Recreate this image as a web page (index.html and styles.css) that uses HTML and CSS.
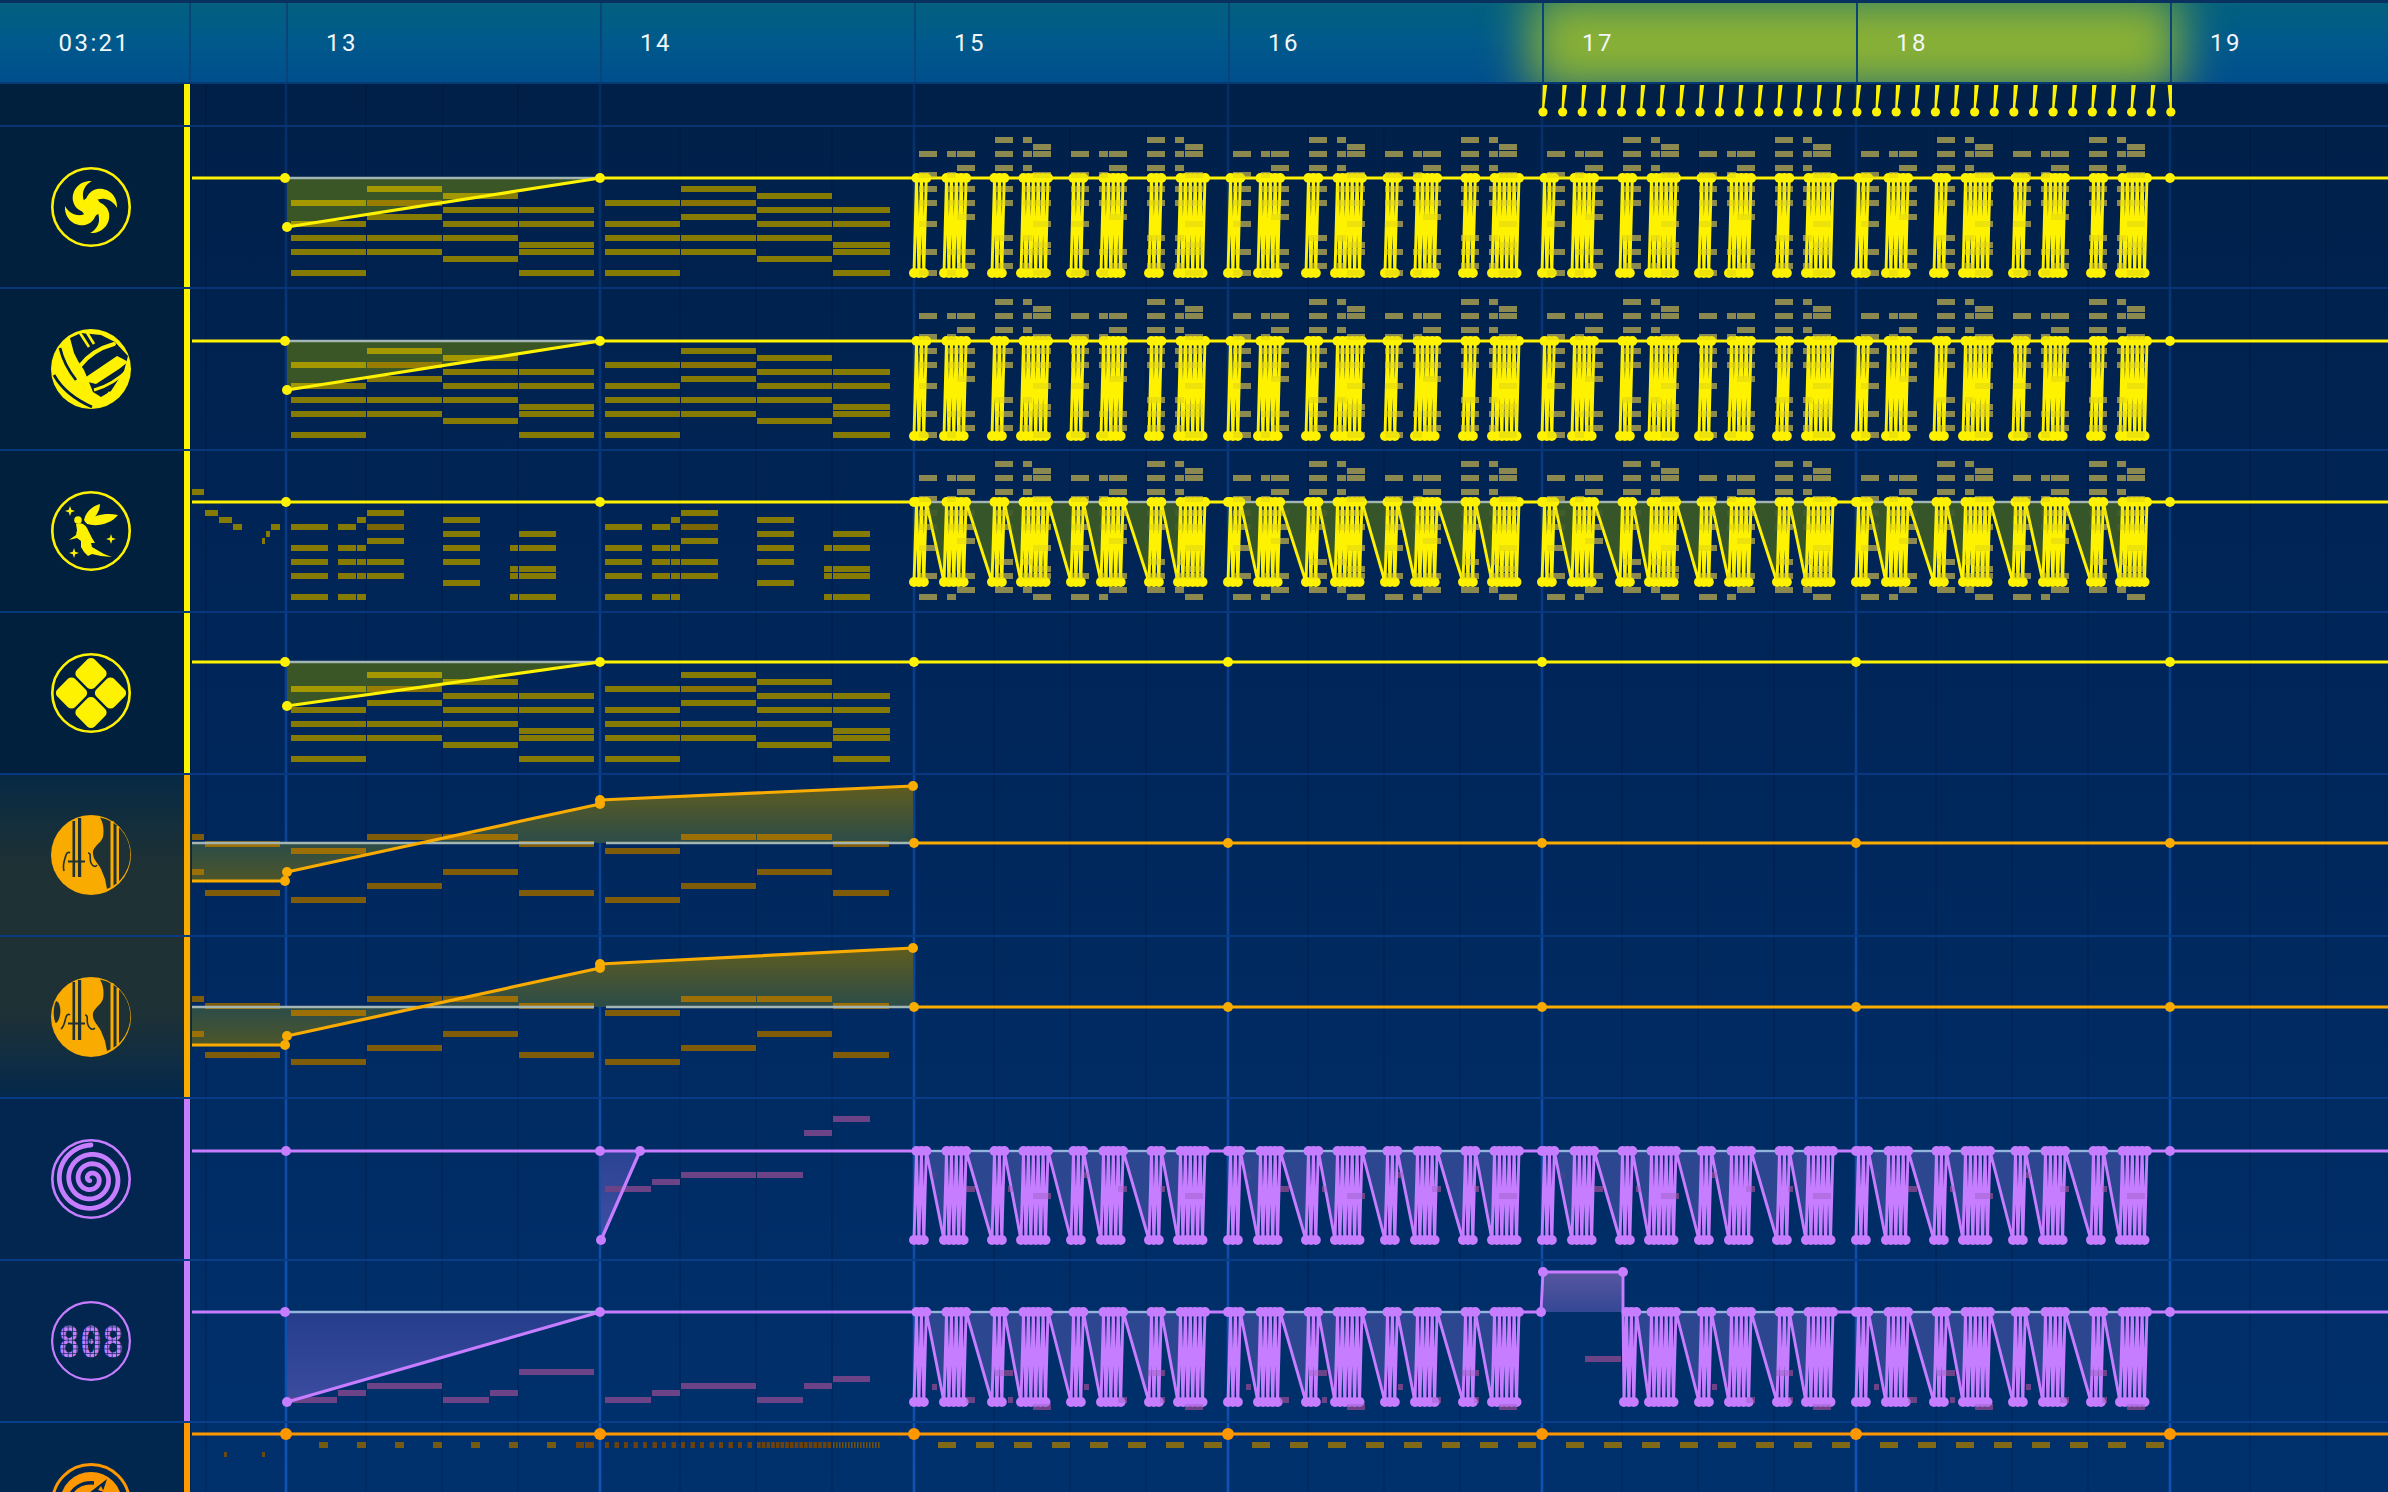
FILE: index.html
```html
<!DOCTYPE html>
<html lang="en">
<head>
<meta charset="utf-8">
<title>Timeline</title>
<link rel="stylesheet" href="styles.css">
</head>
<body>
<div class="app">
  <header class="ruler">
    <div class="glow"></div>
    <div class="time">03:21</div>
    <div class="lead"></div>
    <div class="bar">13</div>
    <div class="bar">14</div>
    <div class="bar">15</div>
    <div class="bar">16</div>
    <div class="bar">17</div>
    <div class="bar">18</div>
    <div class="bar last">19</div>
  </header>
  <div class="tracks">
    <section class="track marker yellow">
      <div class="head"><div class="cell"></div><div class="strip"></div></div>
      <svg class="lane" data-row="marker" xmlns="http://www.w3.org/2000/svg"></svg>
    </section>

    <section class="track yellow">
      <div class="head"><div class="cell">
        <svg class="icon" viewBox="0 0 80 80" xmlns="http://www.w3.org/2000/svg">
          <circle cx="40" cy="40" r="38.7" fill="none" stroke="currentColor" stroke-width="2.6"/>
          <g transform="translate(40 40)" fill="currentColor">
            <circle r="10"/>
            <path d="M1,-26 C-10,-27 -20,-18 -18,-6 C-16,4 -4,8 2,4 C-4,0 -9,-6 -8,-14 C-7,-20 -3,-24 1,-26 Z"/>
            <path transform="rotate(90)" d="M1,-26 C-10,-27 -20,-18 -18,-6 C-16,4 -4,8 2,4 C-4,0 -9,-6 -8,-14 C-7,-20 -3,-24 1,-26 Z"/>
            <path transform="rotate(180)" d="M1,-26 C-10,-27 -20,-18 -18,-6 C-16,4 -4,8 2,4 C-4,0 -9,-6 -8,-14 C-7,-20 -3,-24 1,-26 Z"/>
            <path transform="rotate(270)" d="M1,-26 C-10,-27 -20,-18 -18,-6 C-16,4 -4,8 2,4 C-4,0 -9,-6 -8,-14 C-7,-20 -3,-24 1,-26 Z"/>
          </g>
        </svg>
      </div><div class="strip"></div></div>
      <svg class="lane" data-row="0" xmlns="http://www.w3.org/2000/svg"></svg>
    </section>

    <section class="track yellow">
      <div class="head"><div class="cell">
        <svg class="icon" viewBox="0 0 80 80" xmlns="http://www.w3.org/2000/svg">
          <circle cx="40" cy="40" r="40" fill="currentColor"/>
          <path d="M19 9 L30 4 L50 6 L64 13 L77 27 L73 42 L60 62 L50 68 L42 63 L33 41 L27 32 L23 24 Z" fill="#01203e"/>
          <path d="M29 4 L38 18 M35 2 L43 15" stroke="currentColor" stroke-width="2.6" fill="none"/>
          <path d="M29 37 Q41 21 63 15" stroke="currentColor" stroke-width="4" fill="none" stroke-linecap="round"/>
          <path d="M35 48 L66 27 L72 30 L77 33 L68 40 L45 55 L37 53 Z" fill="currentColor"/>
          <path d="M43 61 Q62 56 79 39" stroke="currentColor" stroke-width="3" fill="none"/>
          <path d="M9 19 Q13 36 25 51" stroke="#01203e" stroke-width="2.8" fill="none"/>
          <path d="M3 46 Q14 66 41 78" stroke="#01203e" stroke-width="2.8" fill="none"/>
          <path d="M52 71 L58 62 L61 70 Z" fill="currentColor"/>
        </svg>
      </div><div class="strip"></div></div>
      <svg class="lane" data-row="1" xmlns="http://www.w3.org/2000/svg"></svg>
    </section>

    <section class="track yellow">
      <div class="head"><div class="cell">
        <svg class="icon" viewBox="0 0 80 80" xmlns="http://www.w3.org/2000/svg">
          <circle cx="40" cy="40" r="38.7" fill="none" stroke="currentColor" stroke-width="2.6"/>
          <g fill="currentColor">
            <path d="M33 29 C35 20 42 15 49 13 C49 21 43 29 35 32 Z"/>
            <path d="M35 31 C44 23 56 22 67 24 C60 33 46 36 36 33 Z"/>
            <circle cx="27" cy="29" r="3.8"/>
            <path d="M25 33 C29 31 34 33 36 37 L41 47 L44 52 L40 52 L41 56 L53 63 L61 66 L50 65 L41 63 L37 65 L33 61 L30 56 L30 50 L26 47 L18 49 L25 44 L26 39 Z"/>
            <path d="M19 15 L20.3 18.7 L24 20 L20.3 21.3 L19 25 L17.7 21.3 L14 20 L17.7 18.7 Z"/>
            <path d="M60 43 L61.2 46.8 L65 48 L61.2 49.2 L60 53 L58.8 49.2 L55 48 L58.8 46.8 Z"/>
            <path d="M23 57 L24.2 60.8 L28 62 L24.2 63.2 L23 67 L21.8 63.2 L18 62 L21.8 60.8 Z"/>
          </g>
        </svg>
      </div><div class="strip"></div></div>
      <svg class="lane" data-row="2" xmlns="http://www.w3.org/2000/svg"></svg>
    </section>

    <section class="track yellow">
      <div class="head"><div class="cell">
        <svg class="icon" viewBox="0 0 80 80" xmlns="http://www.w3.org/2000/svg">
          <circle cx="40" cy="40" r="38.7" fill="none" stroke="currentColor" stroke-width="2.6"/>
          <g fill="currentColor">
            <rect x="27.5" y="8" width="25" height="25" rx="5" transform="rotate(45 40 20.5)"/>
            <rect x="47" y="27.5" width="25" height="25" rx="5" transform="rotate(45 59.5 40)"/>
            <rect x="27.5" y="47" width="25" height="25" rx="5" transform="rotate(45 40 59.5)"/>
            <rect x="8" y="27.5" width="25" height="25" rx="5" transform="rotate(45 20.5 40)"/>
          </g>
        </svg>
      </div><div class="strip"></div></div>
      <svg class="lane" data-row="3" xmlns="http://www.w3.org/2000/svg"></svg>
    </section>

    <section class="track amber glow-a">
      <div class="head"><div class="cell">
        <svg class="icon" viewBox="0 0 80 80" xmlns="http://www.w3.org/2000/svg">
          <circle cx="40" cy="40" r="40" fill="currentColor"/>
          <path d="M49 2.5 C53 9 53 17 52 22 C50 28 44 30 42 36 C41 44 47 48 50 54 L54 64 L56 74 A37.5 37.5 0 0 0 49 2.5 Z" fill="#1e3135"/>
          <rect x="59.5" y="6" width="3" height="66" fill="currentColor"/>
          <rect x="65.5" y="11" width="2.5" height="57" fill="currentColor"/>
          <g fill="#1e3135">
            <rect x="21.5" y="6" width="2.6" height="56"/>
            <rect x="27" y="3" width="3.2" height="59"/>
            <rect x="17" y="45.5" width="17" height="2"/>
          </g>
          <g fill="none" stroke="#1e3135" stroke-width="1.6">
            <path d="M13 56 C11 50 14 44 15 40 C16 37 18 37 19 38"/>
            <path d="M37 38 C41 38 38 44 40 48 C42 52 45 52 46 50"/>
          </g>
        </svg>
      </div><div class="strip"></div></div>
      <svg class="lane" data-row="4" xmlns="http://www.w3.org/2000/svg"></svg>
    </section>

    <section class="track amber glow-b">
      <div class="head"><div class="cell">
        <svg class="icon" viewBox="0 0 80 80" xmlns="http://www.w3.org/2000/svg">
          <circle cx="40" cy="40" r="40" fill="currentColor"/>
          <path d="M49 2.5 C53 9 53 17 52 22 C50 28 44 30 42 36 C41 44 47 48 50 54 L54 64 L56 74 A37.5 37.5 0 0 0 49 2.5 Z" fill="#1e3135"/>
          <rect x="59.5" y="6" width="3" height="66" fill="currentColor"/>
          <rect x="65.5" y="11" width="2.5" height="57" fill="currentColor"/>
          <path d="M5 24 C9 25 10 33 9 38 C8 43 6 46 4.5 46 C2 40 2 30 5 24 Z" fill="#1e3135"/>
          <g fill="#1e3135">
            <rect x="21.5" y="5" width="2.6" height="58"/>
            <rect x="27" y="3" width="3.2" height="60"/>
            <rect x="17" y="45.5" width="17" height="2"/>
          </g>
          <g fill="none" stroke="#1e3135" stroke-width="1.6">
            <path d="M10 52 C13 50 14 44 15 40 C16 37 18 37 19 38"/>
            <path d="M34 38 C38 38 35 44 37 48 C39 53 42 53 44 51"/>
          </g>
        </svg>
      </div><div class="strip"></div></div>
      <svg class="lane" data-row="5" xmlns="http://www.w3.org/2000/svg"></svg>
    </section>

    <section class="track violet">
      <div class="head"><div class="cell">
        <svg class="icon" viewBox="0 0 80 80" xmlns="http://www.w3.org/2000/svg">
          <circle cx="40" cy="40" r="38.7" fill="none" stroke="currentColor" stroke-width="2.6"/>
          <path id="spiral" fill="none" stroke="currentColor" stroke-width="4.8" stroke-linecap="round"/>
        </svg>
      </div><div class="strip"></div></div>
      <svg class="lane" data-row="6" xmlns="http://www.w3.org/2000/svg"></svg>
    </section>

    <section class="track violet">
      <div class="head"><div class="cell">
        <svg class="icon" viewBox="0 0 80 80" xmlns="http://www.w3.org/2000/svg">
          <defs>
            <pattern id="pixels" width="4.4" height="4.4" patternUnits="userSpaceOnUse">
              <rect width="3.7" height="3.7" fill="#c77dff"/>
            </pattern>
          </defs>
          <circle cx="40" cy="40" r="38.9" fill="none" stroke="currentColor" stroke-width="2.2"/>
          <text class="seg" x="40" y="56" text-anchor="middle" textLength="66" lengthAdjust="spacingAndGlyphs" fill="url(#pixels)">808</text>
        </svg>
      </div><div class="strip"></div></div>
      <svg class="lane" data-row="7" xmlns="http://www.w3.org/2000/svg"></svg>
    </section>

    <section class="track orange">
      <div class="head"><div class="cell">
        <svg class="icon" viewBox="0 0 80 80" xmlns="http://www.w3.org/2000/svg">
          <circle cx="40" cy="40" r="38.5" fill="none" stroke="currentColor" stroke-width="3"/>
          <circle cx="40" cy="40" r="31" fill="currentColor"/>
          <path d="M17 36 C22 24 32 19 43 20" fill="none" stroke="#01274f" stroke-width="3.5"/>
          <path d="M38 30 L56 16 L50 34 Z" fill="#01274f"/>
          <path d="M47 27 L50 23 L53 29 Z" fill="currentColor"/>
        </svg>
      </div><div class="strip"></div></div>
      <svg class="lane" data-row="8" xmlns="http://www.w3.org/2000/svg"></svg>
    </section>
  </div>
</div>
<script src="app.js"></script>
</body>
</html>
```
FILE: styles.css
```css
* { box-sizing: border-box; }
html, body { margin: 0; padding: 0; background: #002149; }
.app {
  width: 2388px;
  height: 1492px;
  overflow: hidden;
  display: flex;
  flex-direction: column;
  font-family: Roboto, "Liberation Sans", sans-serif;
}
.ruler {
  position: relative;
  flex: none;
  height: 84px;
  display: flex;
  overflow: hidden;
  border-top: 3px solid #083160;
  border-bottom: 2px solid #063a72;
  background: linear-gradient(180deg, #03607f 0%, #005a8b 45%, #004f8e 100%);
  color: #f1f6f8;
  font-size: 24px;
  letter-spacing: 2.4px;
  line-height: 80px;
}
.glow {
  position: absolute;
  left: 1530px;
  top: -8px;
  width: 650px;
  height: 96px;
  background: #8ab234;
  filter: blur(24px);
}
.time, .lead, .bar { position: relative; flex: none; }
.time { width: 191px; text-align: center; border-right: 2px solid #0a4478; }
.lead { width: 95px; }
.bar { width: 314px; padding-left: 38px; border-left: 2px solid #0a4478; }
.bar.last { width: 218px; }

.tracks { flex: 1; min-height: 0; background: linear-gradient(180deg, #002049 0%, #00265a 45%, #00316d 100%); }
.track {
  display: flex;
  height: 162px;
  border-bottom: 2px solid rgba(24, 92, 200, .34);
}
.track.marker { height: 43px; }
.head { flex: none; width: 191px; display: flex; background: #01203e; }
.cell { flex: none; width: 182px; margin-right: 2px; display: flex; align-items: center; justify-content: center; }
.strip { flex: none; width: 6px; background: currentColor; }
.icon { width: 80px; height: 80px; display: block; overflow: visible; flex: none; }
.lane { flex: none; display: block; width: 2197px; height: 160px; overflow: hidden; }
.marker .lane { height: 41px; }

.yellow { color: #fff200; }
.amber { color: #f9ab00; }
.violet { color: #c77dff; }
.orange { color: #ff9800; }
.violet .head { background: #02264f; }
.orange .head { background: #01274f; }
.glow-a .head { background: linear-gradient(180deg, #062a44 0%, #1e3135 55%, #1f3135 100%); }
.glow-b .head { background: linear-gradient(180deg, #1f3135 0%, #1d3136 50%, #04294c 100%); }
.seg { font-family: "DejaVu Sans Mono", Roboto, monospace; font-size: 42px; font-weight: 700; }
```
FILE: app.js
```javascript
(function () {
  var Y = '#fff200', A = '#f9ab00', V = '#c77dff', O = '#ff9800';
  var BARS = [286, 600, 914, 1228, 1542, 1856, 2170];
  var LINE_Y = [178, 341, 502, 662, 843, 1007, 1151, 1312, 1434];
  var GREY = '#a3b6b4', GREY_V = '#94b4dc';
  var SPIKE_R = 5, SPIKE_W = 2.9, R = 5, W = 3.2;

  function rect(x1, x2, y, c, h, o) {
    return '<rect x="' + x1 + '" y="' + y + '" width="' + (x2 - x1) + '" height="' + (h || 6) + '" fill="' + c + '"' + (o ? ' opacity="' + o + '"' : '') + '/>';
  }
  function line(x1, y1, x2, y2, c, w) {
    return '<line x1="' + x1 + '" y1="' + y1 + '" x2="' + x2 + '" y2="' + y2 + '" stroke="' + c + '" stroke-width="' + (w || W) + '"/>';
  }
  function dot(x, y, c, r) {
    return '<circle cx="' + x + '" cy="' + y + '" r="' + (r || R) + '" fill="' + c + '"/>';
  }
  function poly(pts, fill) {
    return '<polygon points="' + pts.map(function (p) { return p.join(','); }).join(' ') + '" fill="' + fill + '"/>';
  }
  function path(d, c, w) {
    return '<path d="' + d + '" fill="none" stroke="' + c + '" stroke-width="' + (w || W) + '" stroke-linejoin="round"/>';
  }
  function grad(id, y1, y2, c1, c2) {
    return '<linearGradient id="' + id + '" gradientUnits="userSpaceOnUse" x1="0" x2="0" y1="' + y1 + '" y2="' + y2 + '"><stop offset="0" stop-color="' + c1 + '"/><stop offset="1" stop-color="' + c2 + '"/></linearGradient>';
  }

  function grid(y0, h, alpha) {
    var s = line(206, y0, 206, y0 + h, 'rgba(0,14,50,.3)', 1.2);
    [286, 600, 914, 1228, 1542, 1856, 2170].forEach(function (b) {
      s += line(b, y0, b, y0 + h, 'rgba(24,100,215,' + alpha + ')', 2.6);
      [80, 156, 232].forEach(function (o) {
        s += line(b + o, y0, b + o, y0 + h, 'rgba(0,14,50,.3)', 1.2);
      });
    });
    return s;
  }

  var CHORD = [[2, 5, 7, 9, 12], [0, 2, 4, 7, 9], [1, 3, 5, 7, 10], [3, 5, 8, 9, 12]];
  var COLS = [[291, 366], [367, 442], [443, 518], [519, 594]];
  function chordNotes(y0) {
    var out = [];
    [0, 314].forEach(function (sh) {
      COLS.forEach(function (c, i) {
        var x2 = (sh && i === 3) ? 576 : c[1];
        CHORD[i].forEach(function (k) {
          out.push([c[0] + sh, x2 + sh, y0 + 60 + 7 * k, i === 1 && k === 2]);
        });
      });
    });
    return out;
  }
  function sparseNotes(y0) {
    var cols = [
      [291, 328, [2, 5, 7, 9, 12]], [338, 356, [2, 5, 7, 9, 12]], [357, 366, [1, 5, 7, 9, 12]],
      [367, 404, [0, 2, 4, 7, 9]], [443, 480, [1, 3, 5, 7, 10]], [510, 518, [5, 8, 9, 12]], [519, 556, [3, 5, 8, 9, 12]]
    ];
    var out = [];
    [0, 314].forEach(function (sh) {
      cols.forEach(function (c) {
        c[2].forEach(function (k) {
          out.push([c[0] + sh, c[1] + sh, y0 + 60 + 7 * k, c[0] === 367 && k === 2]);
        });
      });
    });
    [[192, 204, 489], [205, 218, 510], [219, 232, 517], [233, 242, 524], [271, 280, 524], [266, 270, 531], [262, 265, 538]].forEach(function (n) {
      out.push([n[0], n[1], n[2], false]);
    });
    return out;
  }
  function noteSvg(list, c, dark) {
    return list.map(function (n) { return rect(n[0], n[1], n[2], n[3] ? dark : c); }).join('');
  }

  var PAT = {
    a: [5, 23, [2, 5, 7, 9, 12, 16, 19]],
    b: [33, 42, [2, 5, 7, 9, 16, 19]],
    c: [43, 61, [2, 4, 7, 9, 11, 16, 18]],
    d: [81, 99, [0, 2, 4, 7, 9, 14, 16, 18]],
    e: [109, 118, [0, 2, 4, 7, 9, 14, 16, 18]],
    f: [119, 137, [1, 2, 5, 7, 9, 12, 15, 16, 19]]
  };
  function patternNotes(y0) {
    var s = '';
    for (var b = 0; b < 4; b++) {
      [0, 152].forEach(function (o) {
        Object.keys(PAT).forEach(function (key) {
          var p = PAT[key];
          p[2].forEach(function (k) {
            s += rect(914 + 314 * b + o + p[0], 914 + 314 * b + o + p[1], y0 + 11 + 7 * k, '#8b8850');
          });
        });
      });
    }
    return s;
  }
  function faintNotes(rels, y0, skipBar) {
    var s = '';
    for (var b = 0; b < 4; b++) {
      [0, 152].forEach(function (o) {
        if (skipBar && b === 2 && o === 0) return;
        rels.forEach(function (r) {
          s += rect(914 + 314 * b + o + r[0], 914 + 314 * b + o + r[1], y0 + r[2], '#6b4386');
        });
      });
    }
    return s;
  }

  function spikes(top, bottom, c, opt) {
    var d = '', dots = '', fills = '', greys = '', lastT = null;
    for (var h = 0; h < 8; h++) {
      var base = 914 + 157 * h;
      [[0, 3], [30, 5], [78, 3], [107, 6]].forEach(function (g, j) {
        if (opt.skip && h === 4 && j < 2) return;
        var special = opt.skip && h === 4 && j === 2;
        var x0 = base + g[0] + (special ? 4 : 0), t0 = x0 + 2.5;
        var boundary = j === 0 && h % 2 === 0;
        if (special) {
          d += ' L1541,' + top + ' L1543,1272 L1623,1272 L1623,' + top + ' L' + x0 + ',' + bottom;
          dots += dot(1541, top, c) + dot(1543, 1272, c) + dot(1623, 1272, c);
          fills += poly([[1543, 1272], [1623, 1272], [1623, top], [1543, top]], 'url(#rectFill)');
        } else if (opt.diag && !boundary) {
          d += ' L' + x0 + ',' + bottom;
          fills += poly([[lastT, top], [t0, top], [x0, bottom]], opt.fill);
          greys += line(lastT, top, t0, top, opt.grey, 2.4);
        } else {
          d += ' L' + t0 + ',' + top + ' L' + x0 + ',' + bottom;
        }
        for (var s = 0; s < g[1]; s++) {
          var b = x0 + 4.9 * s, t = b + 2.5;
          if (s > 0) d += ' L' + b + ',' + bottom;
          d += ' L' + t + ',' + top;
          dots += dot(b, bottom, c, SPIKE_R) + dot(t, top, c, SPIKE_R);
          lastT = t;
        }
      });
    }
    d += ' L2388,' + top;
    return { d: d, dots: dots, fills: fills, greys: greys };
  }

  function barDots(y, c, from, r) {
    return BARS.slice(from).map(function (x) { return dot(x, y, c, r); }).join('');
  }

  function yellowRamp(i, lowY, list) {
    var top = LINE_Y[i];
    var clip = [[287, top], [600, top], [287, lowY]];
    var s = '<defs><clipPath id="c' + i + '">' + poly(clip, '#000') + '</clipPath></defs>';
    s += poly(clip, '#3a5526');
    s += noteSvg(list, '#857b04', '#8a7306');
    s += '<g clip-path="url(#c' + i + ')">' + noteSvg(list, '#a39800', '#977d02') + '</g>';
    return s;
  }

  function render(svg, i) {
    var y0 = 126 + 162 * i, top = LINE_Y[i], s = '', sp;
    svg.setAttribute('viewBox', '191 ' + (y0 + 1) + ' 2197 160');
    s += grid(y0 + 1, 160, (0.24 + 0.055 * i).toFixed(2));

    if (i === 0 || i === 1) {
      var low = i === 0 ? 227 : 390, bot = i === 0 ? 273 : 436;
      s += yellowRamp(i, low, chordNotes(y0));
      s += patternNotes(y0);
      s += line(287, top, 600, top, GREY, 2.4);
      sp = spikes(top, bot, Y, {});
      s += path('M192,' + top + ' L286,' + top + ' M287,' + low + ' L600,' + top + ' L914,' + top, Y);
      s += path('M914,' + top + sp.d, Y, SPIKE_W);
      s += sp.dots + dot(285, top, Y) + dot(287, low, Y) + dot(600, top, Y) + dot(2170, top, Y);
      s += '<g opacity=".14">' + patternNotes(y0) + '</g>';
    }
    if (i === 2) {
      s += noteSvg(sparseNotes(y0), '#857b04', '#7a6604');
      s += patternNotes(y0);
      sp = spikes(top, 582, Y, { diag: true, fill: '#365528', grey: GREY });
      s += sp.fills + sp.greys;
      s += path('M192,' + top + ' L914,' + top, Y);
      s += path('M914,' + top + sp.d, Y, SPIKE_W);
      s += sp.dots + barDots(top, Y, 0);
      s += '<g opacity=".14">' + patternNotes(y0) + '</g>';
    }
    if (i === 3) {
      s += yellowRamp(i, 706, chordNotes(y0));
      s += line(287, top, 600, top, GREY, 2.4);
      s += path('M192,' + top + ' L286,' + top + ' M287,706 L600,' + top + ' L2388,' + top, Y);
      s += dot(285, top, Y) + dot(287, 706, Y) + barDots(top, Y, 1);
    }
    if (i === 4 || i === 5) {
      var a = i === 4
        ? { low: 881, st: 872, m1: 804, m2: 800, end: 786, cross: 420 }
        : { low: 1045, st: 1036, m1: 968, m2: 964, end: 948, cross: 418 };
      var up = [[a.cross, top], [600, a.m1], [600, a.m2], [913, a.end], [913, top]];
      var dn = [[192, top], [a.cross, top], [287, a.st], [286, a.low], [192, a.low]];
      var amber = [
        [192, 204, 60], [192, 204, 95], [205, 280, 67], [205, 280, 116],
        [291, 366, 74], [291, 366, 123], [367, 442, 60], [367, 442, 109], [443, 518, 60], [443, 518, 95], [519, 594, 67], [519, 594, 116],
        [605, 680, 74], [605, 680, 123], [681, 756, 60], [681, 756, 109], [757, 832, 60], [757, 832, 95], [833, 889, 67], [833, 889, 116]
      ];
      var list = amber.map(function (n) { return [n[0], n[1], y0 + n[2], false]; });
      s += '<defs>' + grad('up' + i, a.end, top, '#5f5c1e', '#2b4c49') + grad('dn' + i, top, a.low, '#2b4c49', '#4d5628') +
        '<clipPath id="c' + i + '">' + poly(up, '#000') + poly(dn, '#000') + '</clipPath></defs>';
      s += poly(up, 'url(#up' + i + ')') + poly(dn, 'url(#dn' + i + ')');
      s += noteSvg(list, '#7e5c09', '#7e5c09');
      s += '<g clip-path="url(#c' + i + ')">' + noteSvg(list, '#9c7006', '#9c7006') + '</g>';
      s += line(192, top, 594, top, GREY, 2.4) + line(606, top, 913, top, GREY, 2.4);
      s += path('M192,' + a.low + ' L286,' + a.low + ' M287,' + a.st + ' L600,' + a.m1 + ' L600,' + a.m2 + ' L913,' + a.end + ' M915,' + top + ' L2388,' + top, A);
      s += dot(285, a.low, A) + dot(287, a.st, A) + dot(600, a.m1, A) + dot(600, a.m2, A) + dot(913, a.end, A);
      s += barDots(top, A, 2);
    }
    if (i === 6) {
      s += '<defs>' + grad('ramp6', top, 1240, '#2b4392', '#3f4fa4') + '</defs>';
      s += poly([[600, top], [640, top], [601, 1240]], 'url(#ramp6)');
      [[605, 651, 1186], [652, 680, 1179], [681, 756, 1172], [757, 803, 1172], [804, 832, 1130], [833, 870, 1116]].forEach(function (n) {
        s += rect(n[0], n[1], n[2], '#6b4386');
      });
      var f7 = [[18, 23, 74], [52, 61, 88], [94, 99, 88], [119, 137, 95]];
      s += faintNotes(f7, y0);
      sp = spikes(top, 1240, V, { diag: true, fill: '#2c4790', grey: GREY_V });
      s += sp.fills + sp.greys;
      s += path('M192,' + top + ' L914,' + top + ' M601,1240 L640,' + top, V);
      s += path('M914,' + top + sp.d, V, SPIKE_W);
      s += sp.dots + dot(286, top, V) + dot(600, top, V) + dot(601, 1240, V) + dot(640, top, V);
      s += barDots(top, V, 3);
      s += '<g opacity=".22">' + faintNotes(f7, y0) + '</g>';
    }
    if (i === 7) {
      s += '<defs>' + grad('t7', top, 1402, '#243d8b', '#3d4ca0') + grad('rectFill', 1272, top, '#58569f', '#344896') + '</defs>';
      s += poly([[287, top], [600, top], [287, 1402]], 'url(#t7)');
      [[291, 337, 1397], [338, 366, 1390], [367, 442, 1383], [443, 489, 1397], [490, 518, 1390], [519, 594, 1369],
       [605, 651, 1397], [652, 680, 1390], [681, 756, 1383], [757, 803, 1397], [804, 832, 1383], [833, 870, 1376], [1585, 1621, 1356]].forEach(function (n) {
        s += rect(n[0], n[1], n[2], '#6b4386');
      });
      var f8 = [[18, 23, 124], [52, 61, 137], [94, 99, 137], [119, 137, 144], [81, 99, 110]];
      s += faintNotes(f8, y0, true);
      sp = spikes(top, 1402, V, { diag: true, fill: '#2c4790', grey: GREY_V, skip: true });
      s += sp.fills + sp.greys;
      s += line(287, top, 600, top, GREY_V, 2.4);
      s += path('M192,' + top + ' L286,' + top + ' M287,1402 L600,' + top + ' L914,' + top, V);
      s += path('M914,' + top + sp.d, V, SPIKE_W);
      s += sp.dots + dot(285, top, V) + dot(287, 1402, V) + dot(600, top, V);
      s += dot(2170, top, V) + dot(1228, top, V) + dot(1856, top, V);
      s += '<g opacity=".22">' + faintNotes(f8, y0, true) + '</g>';
    }
    if (i === 8) {
      s += rect(224, 227, 1452, '#6a4a14', 5) + rect(262, 265, 1452, '#6a4a14', 5);
      for (var k = 0; k < 7; k++) s += rect(319 + 38 * k, 328 + 38 * k, 1442, '#755a14');
      s += rect(576, 584, 1442, '#6a4210') + rect(585, 594, 1442, '#6a4210');
      for (k = 0; k < 16; k++) s += rect(605 + 9.5 * k, (k % 2 ? 609.5 : 609) + 9.5 * k, 1442, '#6a4210');
      for (k = 0; k < 16; k++) s += rect(757 + 4.7 * k, 760.7 + 4.7 * k, 1442, '#6a4210');
      for (k = 0; k < 16; k++) s += rect(833 + 3 * k, 834.6 + 3 * k, 1442, '#6a5018');
      [914, 1228, 1542, 1856].forEach(function (b) {
        for (var n = 0; n < 8; n++) s += rect(b + 24 + 38 * n, b + 42 + 38 * n, 1442, '#806a18');
      });
      s += line(192, top, 2388, top, O, 3);
      s += barDots(top, O, 0, 6);
    }
    svg.innerHTML = s;
  }

  function renderMarker(svg) {
    svg.setAttribute('viewBox', '191 84 2197 41');
    var s = '';
    [206, 366, 443, 518].forEach(function (x) { s += line(x, 84, x, 125, 'rgba(0,14,50,.3)', 1.2); });
    BARS.forEach(function (x) {
      s += line(x, 84, x, 125, 'rgba(24,100,215,.2)', 2.6);
    });
    for (var n = 0; n <= 32; n++) {
      var x = 1543 + 19.62 * n, t = n === 32 ? x - 1 : x + 2;
      s += poly([[t - 2.2, 85], [t + 2.2, 85], [x + 1, 110], [x - 1, 110]], Y);
      s += dot(x, 112, Y, 4.6);
    }
    svg.innerHTML = s;
  }

  document.querySelectorAll('svg[data-row]').forEach(function (svg) {
    var r = svg.getAttribute('data-row');
    if (r === 'marker') renderMarker(svg); else render(svg, +r);
  });

  var d = '', steps = 200;
  for (var t = 0; t <= steps; t++) {
    var ang = t / steps * Math.PI * 2 * 3.4 + 2.2;
    var rad = 2 + t / steps * 32;
    d += (t ? 'L' : 'M') + (40 + rad * Math.cos(ang)).toFixed(2) + ',' + (40 + rad * Math.sin(ang)).toFixed(2);
  }
  document.getElementById('spiral').setAttribute('d', d);
})();
```
